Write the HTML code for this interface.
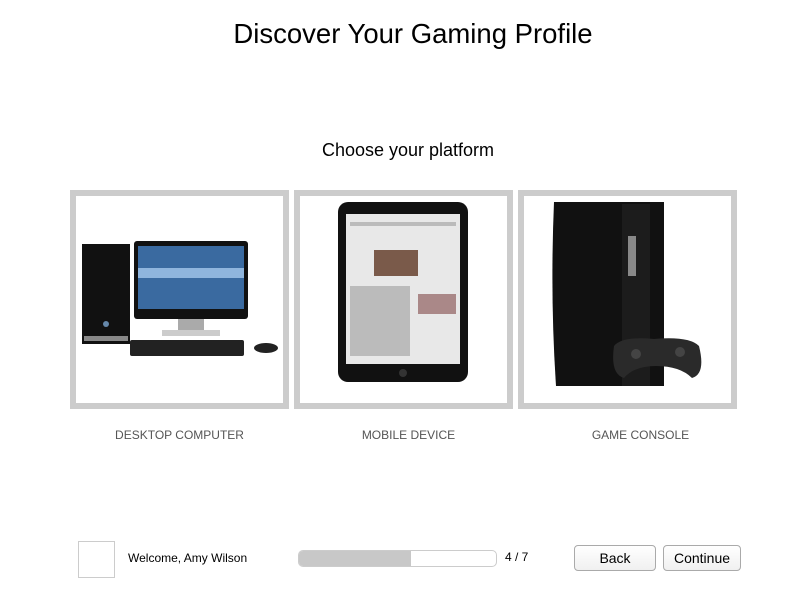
<!DOCTYPE html>
<html><head><meta charset="utf-8"><style>
*{margin:0;padding:0;box-sizing:border-box}
body{width:800px;height:600px;background:#fff;font-family:"Liberation Sans",sans-serif;position:relative;overflow:hidden;color:#000}
h1{position:absolute;top:18px;left:0;width:826px;text-align:center;font-size:27.5px;font-weight:normal}
h2{position:absolute;top:140px;left:0;width:816px;text-align:center;font-size:18px;font-weight:normal}
.card{position:absolute;top:190px;width:219px;height:219px;border:6px solid #ccc;background:#fff}
.lbl{position:absolute;top:428px;width:219px;text-align:center;font-size:12px;color:#555}
.av{position:absolute;left:78px;top:541px;width:37px;height:37px;border:1px solid #ccc}
.wel{position:absolute;left:128px;top:551px;font-size:12px}
.bar{position:absolute;left:298px;top:550px;width:199px;height:17px;border:1px solid #ccc;border-radius:5px;overflow:hidden;background:#fff}
.bar div{width:112px;height:100%;background:#c8c8c8}
.cnt{position:absolute;left:505px;top:550px;font-size:12px}
.btn{position:absolute;top:545px;height:26px;border:1px solid #aaa;border-radius:4px;background:linear-gradient(#fff,#f0f0f0);font-size:14px;text-align:center;line-height:24px}
</style></head><body>
<h1>Discover Your Gaming Profile</h1>
<h2>Choose your platform</h2>

<div class="card" style="left:70px"><svg width="207" height="207" viewBox="0 0 207 207">
<rect x="6" y="48" width="48" height="100" fill="#111"/><rect x="8" y="140" width="44" height="5" fill="#888"/>
<circle cx="30" cy="128" r="3" fill="#68a"/>
<rect x="58" y="45" width="114" height="78" rx="3" fill="#111"/>
<rect x="62" y="50" width="106" height="63" fill="#3a6aa0"/><rect x="62" y="72" width="106" height="10" fill="#8fb5dd"/>
<rect x="102" y="123" width="26" height="12" fill="#aaa"/><rect x="86" y="134" width="58" height="6" fill="#ccc"/>
<rect x="54" y="144" width="114" height="16" rx="2" fill="#222"/>
<ellipse cx="190" cy="152" rx="12" ry="5" fill="#222"/>
</svg></div>
<div class="card" style="left:294px"><svg width="207" height="207" viewBox="0 0 207 207">
<rect x="38" y="6" width="130" height="180" rx="10" fill="#111"/>
<rect x="46" y="18" width="114" height="150" fill="#e8e8e8"/>
<rect x="74" y="54" width="44" height="26" fill="#7a5a4a"/><rect x="118" y="98" width="38" height="20" fill="#a88"/>
<g fill="#bbb"><rect x="50" y="26" width="106" height="4"/><rect x="50" y="90" width="60" height="70"/></g>
<circle cx="103" cy="177" r="4" fill="#333"/>
</svg></div>
<div class="card" style="left:518px"><svg width="207" height="207" viewBox="0 0 207 207">
<path d="M30 6 L140 6 L140 190 L32 190 Q26 100 30 6Z" fill="#111"/>
<rect x="98" y="8" width="28" height="182" fill="#1c1c1c"/><rect x="104" y="40" width="8" height="40" fill="#888"/>
<path d="M90 150 Q98 140 130 143 Q165 140 175 150 Q182 178 168 182 Q156 170 132 170 Q110 170 100 182 Q86 178 90 150Z" fill="#2a2a2a"/>
<circle cx="112" cy="158" r="5" fill="#444"/><circle cx="156" cy="156" r="5" fill="#444"/>
</svg></div>
<div class="lbl" style="left:70px">DESKTOP COMPUTER</div>
<div class="lbl" style="left:299px">MOBILE DEVICE</div>
<div class="lbl" style="left:531px">GAME CONSOLE</div>

<div class="av"></div>
<div class="wel">Welcome, Amy Wilson</div>
<div class="bar"><div></div></div>
<div class="cnt">4 / 7</div>
<div class="btn" style="left:574px;width:82px">Back</div>
<div class="btn" style="left:663px;width:78px">Continue</div>
</body></html>
